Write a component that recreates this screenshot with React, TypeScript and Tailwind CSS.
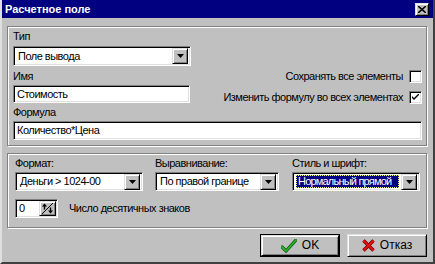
const field =
  'border border-t-[#808080] border-l-[#808080] border-b-white border-r-white shadow-[inset_1px_1px_0_#000,inset_-1px_-1px_0_#dfdfdf] bg-white';
const raised =
  'border border-t-[#dfdfdf] border-l-[#dfdfdf] border-b-black border-r-black shadow-[inset_1px_1px_0_#fff,inset_-1px_-1px_0_#808080] bg-[#c0c0c0]';
const etched = 'border border-[#808080] shadow-[inset_1px_1px_0_#fff,1px_1px_0_#fff]';

function DropArrow() {
  return (
    <div className={`${raised} flex h-[16px] w-[16px] shrink-0 items-center justify-center`}>
      <svg width="7" height="4" viewBox="0 0 7 4">
        <path d="M0 0h7L3.5 4z" fill="#000" />
      </svg>
    </div>
  );
}

function Combo({ value, className, selected }: { value: string; className: string; selected?: boolean }) {
  return (
    <div className={`${field} ${className} flex items-center p-[2px]`}>
      <div className="flex h-full min-w-0 flex-1 items-center overflow-hidden whitespace-nowrap pl-[1px] pr-[2px]">
        {selected ? (
          <span className="flex h-full w-full items-center border border-dotted border-[#ffff80] bg-[#000080] pl-[1px] tracking-[-0.8px] text-white">
            {value}
          </span>
        ) : (
          <span className="pl-[1px]">{value}</span>
        )}
      </div>
      <DropArrow />
    </div>
  );
}

function CheckBox({ label, checked }: { label: string; checked?: boolean }) {
  return (
    <div className="flex h-[13px] items-center gap-[6px]">
      <span className="whitespace-nowrap">{label}</span>
      <div className={`${field} flex h-[13px] w-[13px] items-center justify-center`}>
        {checked && (
          <svg width="7" height="7" viewBox="0 0 7 7">
            <path d="M0 2v2l2 2 5-5V-1L2 4z" fill="#000" />
          </svg>
        )}
      </div>
    </div>
  );
}

function DialogButton({ label, icon, isDefault }: { label: string; icon: React.ReactNode; isDefault?: boolean }) {
  return (
    <div className={`h-[23px] w-[80px] ${isDefault ? 'border border-black' : ''}`}>
      <div className={`${raised} flex h-full w-full items-center justify-center gap-[5px]`}>
        {icon}
        <span className="font-['Liberation_Sans_Narrow','Liberation_Sans',sans-serif] text-[12px] tracking-normal">{label}</span>
      </div>
    </div>
  );
}

export default function App() {
  return (
    <div className="flex h-[264px] w-[435px] flex-col border-b-2 border-l-2 border-r-2 border-b-[#404040] border-l-[#dfdfdf] border-r-[#404040] bg-[#c0c0c0] font-['Liberation_Sans',Arial,sans-serif] text-[11px] leading-[13px] text-black">
      <div className="flex h-[18px] shrink-0 items-center justify-between bg-[#000080] pl-[3px] pr-[4px]">
        <span className="text-[11px] font-bold text-white">Расчетное поле</span>
        <div className={`${raised} flex h-[13px] w-[14px] items-center justify-center`}>
          <svg width="8" height="7" viewBox="0 0 8 7">
            <path d="M0 0l8 7M8 0L0 7" stroke="#000" strokeWidth="1.6" />
          </svg>
        </div>
      </div>

      <div className="flex flex-col pl-[5px] pr-[6px] pt-[8px] tracking-[-0.5px]">
        <section className={`${etched} flex h-[120px] flex-col pl-[5px] pr-[4px] pt-[3px]`}>
          <div className="h-[13px]">Тип</div>
          <Combo value="Поле вывода" className="mt-[3px] h-[20px] w-[178px]" />
          <div className="mt-[4px] flex items-start justify-between">
            <div className="flex w-[177px] flex-col">
              <div className="h-[13px]">Имя</div>
              <div className={`${field} mt-[2px] flex h-[18px] items-center px-[3px]`}>Стоимость</div>
            </div>
            <div className="flex flex-col items-end gap-[8px]">
              <CheckBox label="Сохранять все элементы" />
              <CheckBox label="Изменить формулу во всех элементах" checked />
            </div>
          </div>
          <div className="mt-[2px] h-[13px]">Формула</div>
          <div className={`${field} mt-[2px] flex h-[19px] w-[409px] items-center px-[3px]`}>Количество*Цена</div>
        </section>

        <section className={`${etched} mt-[7px] flex h-[75px] flex-col pl-[7px] pt-[3px]`}>
          <div className="flex">
            <div className="flex w-[128px] flex-col">
              <div className="h-[13px]">Формат:</div>
              <Combo value="Деньги > 1024-00" className="mt-[2px] h-[19px]" />
            </div>
            <div className="ml-[12px] flex w-[124px] flex-col">
              <div className="h-[13px]">Выравнивание:</div>
              <Combo value="По правой границе" className="mt-[2px] h-[19px]" />
            </div>
            <div className="ml-[13px] flex w-[128px] flex-col">
              <div className="h-[13px]">Стиль и шрифт:</div>
              <Combo value="Нормальный прямой" className="mt-[2px] h-[19px]" selected />
            </div>
          </div>
          <div className="mt-[8px] flex items-center">
            <div className={`${field} flex h-[19px] w-[43px] items-center p-[1px]`}>
              <span className="flex-1 pl-[2px]">0</span>
              <div className={`${raised} flex h-full w-[17px] items-center justify-center`}>
                <svg width="13" height="13" viewBox="0 0 13 13">
                  <path d="M1 12L12 1" stroke="#000" strokeWidth="1" />
                  <path d="M3.5 2.5v5M9.5 5.5v5" stroke="#000" strokeWidth="1.4" />
                  <path d="M1 4.5l2.5-3 2.5 3zM7 8.5l2.5 3 2.5-3z" fill="#000" />
                </svg>
              </div>
            </div>
            <span className="ml-[11px]">Число десятичных знаков</span>
          </div>
        </section>

        <div className="mt-[6px] flex justify-end gap-[7px]">
          <DialogButton
            label="OK"
            isDefault
            icon={
              <svg width="16" height="14" viewBox="0 0 16 14">
                <path d="M1 8l4 4L15 1" fill="none" stroke="#0a5a0a" strokeWidth="3.2" strokeLinecap="round" />
                <path d="M1 8l4 4L15 1" fill="none" stroke="#2bb02b" strokeWidth="1.8" strokeLinecap="round" />
              </svg>
            }
          />
          <DialogButton
            label="Отказ"
            icon={
              <svg width="13" height="13" viewBox="0 0 13 13">
                <path d="M1.5 1.5l10 10M11.5 1.5l-10 10" stroke="#7a0000" strokeWidth="3.4" />
                <path d="M1.5 1.5l10 10M11.5 1.5l-10 10" stroke="#e01010" strokeWidth="2" />
              </svg>
            }
          />
        </div>
      </div>
    </div>
  );
}
